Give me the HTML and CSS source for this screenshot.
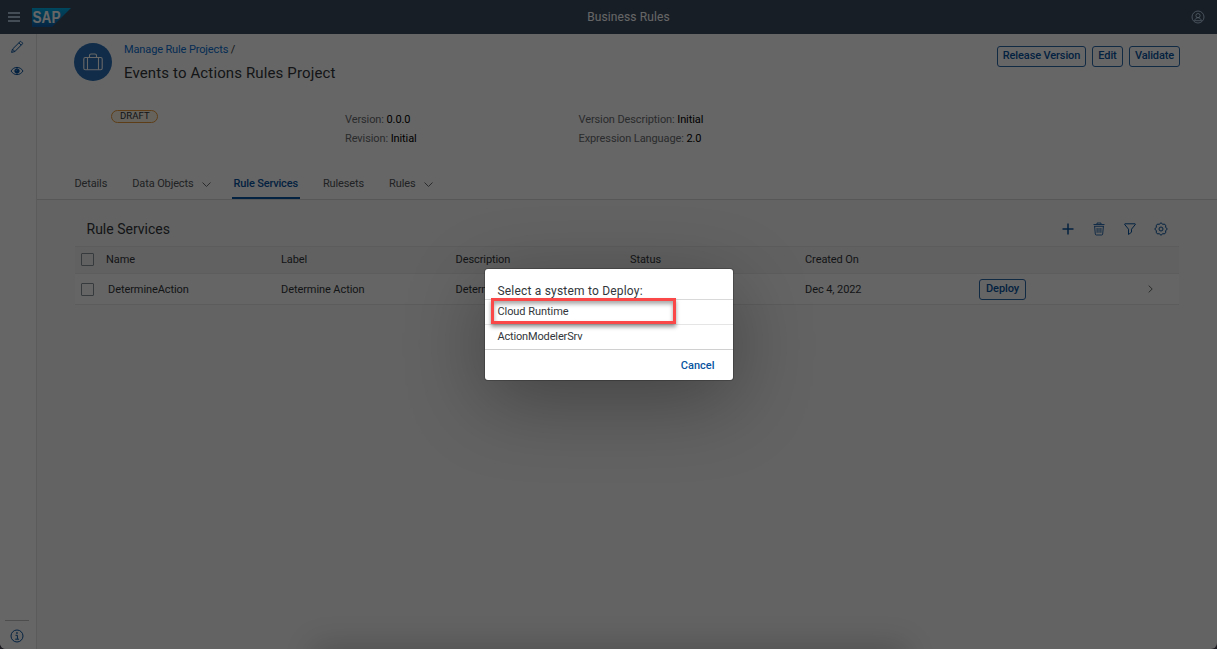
FILE: index.html
```html
<!DOCTYPE html>
<html lang="en">
<head>
<meta charset="utf-8">
<title>Business Rules</title>
<link rel="stylesheet" href="styles.css">
</head>
<body>
<div class="app">
  <header class="shell">
    <svg class="menu" width="12" height="10" viewBox="0 0 12 10"><path d="M0 1h12M0 5h12M0 9h12" stroke="#d1e8ff" stroke-width="1.3"/></svg>
    <svg class="logo" width="40" height="19" viewBox="0 0 40 19">
      <defs><linearGradient id="lg" x1="0" y1="0" x2="0" y2="1"><stop offset="0" stop-color="#00b1eb"/><stop offset="1" stop-color="#0f5ca8"/></linearGradient></defs>
      <path d="M0 0h39L20 19H0z" fill="url(#lg)"/>
      <text x="0.5" y="15" class="logo-text" textLength="28" lengthAdjust="spacingAndGlyphs">SAP</text>
    </svg>
    <span class="shell-title">Business Rules</span>
    <svg class="user" width="14" height="14" viewBox="0 0 14 14" fill="none" stroke="#d1e8ff" stroke-opacity=".8"><circle cx="7" cy="7" r="6"/><circle cx="7" cy="5.6" r="2.1"/><path d="M3.6 10.7c.5-1.9 1.8-3 3.4-3s2.900 1.100 3.400 3z"/></svg>
  </header>
  <div class="body">
    <nav class="side">
      <svg width="14" height="14" viewBox="0 0 14 14" fill="none" stroke="#0854a0"><path d="M1.600 12.400l.9-3.300 7.600-7.500q.5-.4 1 0l1.300 1.300q.4.500 0 1L4.900 11.500zM2.500 9.100l2.400 2.400M8.900 2.800l2.300 2.300"/></svg>
      <svg width="14" height="14" viewBox="0 0 14 14" fill="none" stroke="#0854a0"><path d="M1 7c1.500-2.400 3.600-3.600 6-3.600S11.500 4.600 13 7c-1.500 2.400-3.600 3.600-6 3.600S2.500 9.400 1 7z"/><circle cx="7" cy="7" r="2.200" fill="#0854a0"/><path d="M6.300 6.500l.7-.7" stroke="#fff" stroke-width=".8"/></svg>
      <div class="side-foot"><svg width="14" height="14" viewBox="0 0 14 14" fill="none" stroke="#0854a0"><circle cx="7" cy="7" r="6"/><path d="M5.500 6.300h1.900v3.600M5.200 10.200h3.800" stroke-width="1"/><path d="M6.200 3.900h1.500" stroke-width="1.500"/></svg></div>
    </nav>
    <main class="main">
      <section class="head">
        <div class="head-top">
          <div class="avatar"><svg width="20" height="18" viewBox="0 0 20 18" fill="none" stroke="#fff" stroke-width="1.100"><rect x=".8" y="4.500" width="18.400" height="12.200" rx="1.500"/><path d="M6.500 4.300V2.500Q6.500 1 8 1h4q1.500 0 1.500 1.500v1.800M4.500 4.500v12.200M15.500 4.500v12.200"/></svg></div>
          <div class="titles">
            <div class="crumb"><a>Manage Rule Projects</a> /</div>
            <h1>Events to Actions Rules Project</h1>
          </div>
          <div class="actions"><button class="b-release">Release Version</button><button class="b-edit">Edit</button><button class="b-validate">Validate</button></div>
        </div>
        <div class="facts">
          <div class="draft-cell"><span class="draft">DRAFT</span></div>
          <div class="fact"><p>Version: <b>0.0.0</b></p><p>Revision: <b>Initial</b></p></div>
          <div class="fact"><p>Version Description: <b>Initial</b></p><p>Expression Language: <b>2.0</b></p></div>
        </div>
        <div class="tabs">
          <span class="tab">Details</span>
          <span class="tab objects">Data Objects <svg width="9" height="5" viewBox="0 0 9 5"><path d="M.5.5l4 4 4-4" fill="none" stroke="#6a6d70"/></svg></span>
          <span class="tab active">Rule Services</span>
          <span class="tab">Rulesets</span>
          <span class="tab">Rules <svg width="9" height="5" viewBox="0 0 9 5"><path d="M.5.5l4 4 4-4" fill="none" stroke="#6a6d70"/></svg></span>
        </div>
      </section>
      <section class="content">
        <div class="toolbar">
          <h2>Rule Services</h2>
          <div class="tools">
            <svg width="14" height="14" viewBox="0 0 14 14"><path d="M7 1.500v11M1.500 7h11" stroke="#0854a0" stroke-width="1.500"/></svg>
            <svg width="14" height="14" viewBox="0 0 14 14" fill="none" stroke="#0854a0" stroke-width=".85"><path d="M1.500 2.500h11M5 2V1h4v1M2 4.300h10M2.600 4.500l.7 7.500q.1 1 1 1h5.400q.9 0 1-1l.7-7.500M5.100 6v4.800M7 6v4.800M8.900 6v4.800"/></svg>
            <svg width="14" height="14" viewBox="0 0 14 14" fill="none" stroke="#0854a0"><path d="M2 1.800h10q.7.100.3.700L8.500 7.200v3L5.500 12.500V7.200L1.700 2.500q-.4-.6.3-.7z"/></svg>
            <svg width="14" height="14" viewBox="0 0 14 14" fill="none" stroke="#0854a0"><path d="M5.400 2.400Q6 .9 7 .9t1.600 1.500Q10.300 1.700 11.200 2.600t.4 2.800Q13.100 6 13.100 7t-1.500 1.600q.5 1.900-.4 2.800t-2.600.2Q8 13.100 7 13.100t-1.600-1.500q-1.700.7-2.600-.2t-.4-2.800Q.9 8 .9 7t1.500-1.600q-.5-1.900.4-2.800t2.600-.2z"/><circle cx="7" cy="7" r="2"/></svg>
          </div>
        </div>
        <div class="row th"><i class="box"></i><span>Name</span><span>Label</span><span>Description</span><span>Status</span><span>Created On</span></div>
        <div class="row td"><i class="box"></i><span class="name">DetermineAction</span><span>Determine Action</span><span>Determ</span><span></span><span>Dec 4, 2022</span><span class="deploy"><button>Deploy</button></span><svg width="5" height="8" viewBox="0 0 5 8"><path d="M.7.600L4.200 4 .7 7.400" fill="none" stroke="#6a6d70"/></svg></div>
      </section>
    </main>
  </div>
</div>
<div class="overlay"></div>
<div class="dialog">
  <div class="dialog-title">Select a system to Deploy:</div>
  <div class="item">Cloud Runtime</div>
  <div class="item model">ActionModelerSrv</div>
  <div class="dialog-foot"><span>Cancel</span></div>
  <div class="highlight"></div>
</div>
</body>
</html>
```
FILE: styles.css
```css
* { box-sizing: border-box; }
body { margin: 0; width: 1217px; height: 649px; overflow: hidden; position: relative; background: #4a4658; font-family: Roboto, "Liberation Sans", sans-serif; font-size: 11px; line-height: 14px; color: #32363a; }
svg { display: block; flex: none; overflow: visible; }
h1, h2, p { margin: 0; font-weight: 400; }
b { font-weight: 400; color: #000; }
button { font: inherit; height: 21px; padding: 0 0 1px; color: #0854a0; background: transparent; border: 1px solid #2a69ab; border-radius: 3px; font-weight: 500; white-space: nowrap; letter-spacing: -.12px; }
.app { height: 649px; display: flex; flex-direction: column; background: #f7f7f7; border-radius: 0 0 6px 6px; overflow: hidden; }
.shell { height: 34px; flex: none; background: #3a4b60; display: grid; grid-template-columns: 24px 40px 1fr 40px; align-items: center; padding: 0 12px 0 8px; }
.logo-text { font: 700 16px "Liberation Sans", sans-serif; fill: #fff; }
.shell-title { text-align: center; color: #fff; font-size: 12px; padding-left: 20px; letter-spacing: .1px; }
.user { justify-self: end; }
.body { flex: 1; display: flex; min-height: 0; }
.side { width: 37px; background: #fff; border-right: 1px solid #e3e3e3; display: flex; flex-direction: column; align-items: center; padding: 6px 2px 6px 0; gap: 10px; }
.side-foot { margin-top: auto; width: 24px; border-top: 1px solid #c0c0c0; padding: 8px 5px 0; }
.main { flex: 1; min-width: 0; }
.head { height: 166px; background: #fff; border-bottom: 1px solid #d9d9d9; padding-left: 37.400px; display: flex; flex-direction: column; }
.head-top { display: flex; padding: 8px 37px 0 0; height: 76px; }
.avatar { width: 38px; height: 38px; border-radius: 50%; background: #286eb4; display: flex; align-items: center; justify-content: center; margin: 1px 0 0 -.4px; }
.titles { padding-left: 12px; }
.crumb a { color: #0a6ed1; }
.crumb { letter-spacing: -.13px; padding-top: 1px; }
h1 { font-size: 15px; line-height: 20px; margin-top: 6px; letter-spacing: .13px; }
.actions { margin: 4px 0 0 auto; display: flex; gap: 6px; }
.b-release { width: 89px; }
.b-edit { width: 31px; }
.b-validate { width: 51px; }
.facts { display: grid; grid-template-columns: 270.600px 233.500px 1fr; height: 67px; color: #6a6d70; }
.draft { display: block; width: 47px; height: 13px; margin-left: 37px; border: 1px solid #e99a3a; border-radius: 7px; color: #32363a; font-size: 9.500px; line-height: 10px; text-align: center; letter-spacing: .1px; background: #fff8e8; }
.fact p { line-height: 19.500px; letter-spacing: -.1px; }
.tabs { display: flex; height: 23px; gap: 25px; color: #515559; letter-spacing: -.12px; }
.tab { display: flex; gap: 8px; align-items: center; height: 16px; white-space: nowrap; }
.objects { margin-right: -2px; }
.active { color: #0854a0; font-weight: 500; height: 23px; padding: 0 2px 5px; margin-left: -2px; margin-right: -2px; border-bottom: 2px solid #0854a0; letter-spacing: -.17px; }
.content { padding: 12px 38px 0 37.500px; }
.toolbar { height: 34px; display: flex; justify-content: space-between; padding: 6px 11px 0 12px; }
h2 { font-size: 14px; line-height: 22px; }
.tools { display: flex; gap: 17px; padding-top: 4px; }
.row { display: grid; grid-template-columns: 31.500px 175px 174.500px 174.500px 175px 174px 168.500px 5px; align-items: center; letter-spacing: -.08px; }
.box { width: 13px; height: 13px; border: 1px solid #89919a; border-radius: 1px; margin-left: 6.500px; }
.th { height: 28px; background: #f2f2f2; border-top: 1px solid #e5e5e5; border-bottom: 1px solid #e8e8e8; }
.th .box { margin-top: -1px; }
.td { height: 31px; background: #fcfcfc; border-bottom: 1px solid #e5e5e5; }
.td > span { padding-top: 1px; }
.name { padding-left: 2px; }
.td > .deploy { padding-top: 0; }
.deploy button { width: 47px; display: block; padding: 0; }
.overlay { position: absolute; inset: 0; background: rgba(0, 0, 0, .6); }
.overlay::after { content: ""; position: absolute; left: 320px; right: 317px; bottom: -22px; height: 20px; box-shadow: 0 0 30px 6px rgba(0, 0, 0, .18); }
.dialog { position: absolute; left: 485px; top: 269px; width: 248px; height: 111px; background: #fff; border-radius: 3px; box-shadow: 0 0 0 1px rgba(0, 0, 0, .2), 0 20px 80px rgba(0, 0, 0, .33); display: flex; flex-direction: column; }
.dialog-title { height: 31px; padding: 15px 12.400px 0; font-size: 12px; border-bottom: 1px solid #d9d9d9; letter-spacing: .2px; }
.item { height: 25px; line-height: 24px; padding-left: 12.400px; border-bottom: 1px solid #e5e5e5; letter-spacing: -.05px; }
.model { border-color: #d0d0d0; letter-spacing: -.15px; }
.dialog-foot { flex: 1; text-align: right; padding: 9px 18.500px 0; color: #0854a0; font-weight: 500; }
.highlight { position: absolute; left: 6px; top: 29px; width: 185px; height: 26px; border: 3px solid #fa4848; box-shadow: 0 3px 4px rgba(0, 0, 0, .4), inset 0 3px 4px rgba(0, 0, 0, .35); }
```
